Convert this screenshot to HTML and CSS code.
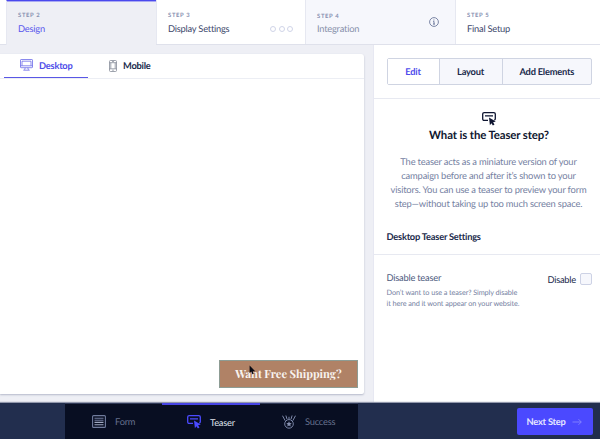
FILE: index.html
```html
<!DOCTYPE html>
<html lang="en">
<head>
<meta charset="utf-8">
<title>Campaign builder</title>
<link rel="stylesheet" href="styles.css">
</head>
<body>
<div class="app">
  <nav class="steps">
    <div class="step active"><small>STEP 2</small><span>Design</span></div>
    <div class="step display"><small>STEP 3</small><span>Display Settings</span>
      <div class="dots"><i></i><i></i><i></i></div></div>
    <div class="step muted"><small>STEP 4</small><span>Integration</span>
      <svg class="info" width="10" height="10" viewBox="0 0 10 10" fill="none" stroke="#6d799c"><circle cx="5" cy="5" r="4.4" stroke-width=".9"/><path d="M4.2 4.4H5V7M4 7.1h2M4.9 2.5v1"/></svg></div>
    <div class="step final"><small>STEP 5</small><span>Final Setup</span></div>
  </nav>
  <main class="main">
    <section class="canvas">
      <div class="card">
        <div class="tabs">
          <div class="tab on">
            <svg width="13" height="12" viewBox="0 0 13 12" fill="none" stroke="#6c6be8" stroke-width=".8"><rect x=".5" y=".5" width="12" height="8.2" rx=".6"/><path d="M.5 6.8h12M2 2.2h9v4.5M2 2.2v4.5M5.2 8.8l-.6 2M7.8 8.8l.6 2M3.3 11.2h6.4"/></svg>
            <span>Desktop</span></div>
          <div class="tab mobile">
            <svg width="8" height="12" viewBox="0 0 8 12" fill="none" stroke="#858b98" stroke-width=".8"><rect x=".5" y=".5" width="7" height="11" rx="1"/><path d="M.5 2.7h7M.5 8.8h7M3 1.6h2M3.2 10.2h1.6M1.8 2.7v6M6.2 2.7v6"/></svg>
            <span>Mobile</span></div>
        </div>
        <div class="stage">
          <div class="teaser"><span>Want Free Shipping?</span>
            <svg class="cursor" width="7" height="10" viewBox="0 0 7 10"><path d="M.6.5v7.6l1.7-1.5 1.1 2.7 1.4-.6-1.1-2.5h2.5z" fill="#090b14"/></svg></div>
        </div>
      </div>
    </section>
    <aside class="panel">
      <div class="modes">
        <div class="group"><b class="on">Edit</b><b>Layout</b><b>Add Elements</b></div>
      </div>
      <div class="about">
        <svg width="14" height="14" viewBox="0 0 14 14" fill="none" stroke="#0d1430" stroke-width="1.3"><path d="M6 8.3H2.2Q.7 8.3.7 6.8V2.1Q.7.7 2.2.7h9.6q1.5 0 1.5 1.4v4.7q0 1-1 1.4M3 3.9h8"/><path d="M7 5.6l6.8 3.8-2.7.9 1.4 2.1-1.6 1.1-1.5-2.3-1.5 2.1z" fill="#0d1430" stroke="none"/></svg>
        <h2>What is the Teaser step?</h2>
        <p>The teaser acts as a miniature version of your<br>campaign before and after it’s shown to your<br>visitors. You can use a teaser to preview your form<br>step—without taking up too much screen space.</p>
      </div>
      <h3>Desktop Teaser Settings</h3>
      <div class="setting">
        <div><h4>Disable teaser</h4>
          <p>Don’t want to use a teaser? Simply disable<br>it here and it wont appear on your website.</p></div>
        <label><span>Disable</span><i class="box"></i></label>
      </div>
    </aside>
  </main>
  <footer class="footer">
    <div class="views">
      <div class="view form">
        <svg width="14" height="13" viewBox="0 0 14 13" fill="none" stroke="#707b9c" stroke-width="1.1"><rect x=".6" y=".6" width="12.8" height="11.8" rx="1"/><path d="M2.5 3.2h9M2.5 5.2h9"/><path d="M2.5 7.4h9M2.5 9.8h9" stroke="#a0a9c1"/></svg>
        <span>Form</span></div>
      <div class="view current">
        <svg width="14" height="14" viewBox="0 0 14 14" fill="none" stroke="#4b4aff" stroke-width="1.3"><path d="M6 8.3H2.2Q.7 8.3.7 6.8V2.1Q.7.7 2.2.7h9.6q1.5 0 1.5 1.4v4.7q0 1-1 1.4M3 3.9h8"/><path d="M7 5.6l6.8 3.8-2.7.9 1.4 2.1-1.6 1.1-1.5-2.3-1.5 2.1z" fill="#4b4aff" stroke="none"/></svg>
        <span>Teaser</span></div>
      <div class="view success">
        <svg width="14" height="14" viewBox="0 0 14 14" fill="none" stroke="#7d88aa" stroke-width="1"><circle cx="7" cy="8.9" r="4.3"/><path d="M.5.7l2.7 5M13.5.7l-2.7 5M3.9.5L5 4.2M10.1.5L9 4.2M7 1.8v2.5"/><path d="M7 6.2l.8 1.8 1.9.2-1.4 1.3.4 1.9L7 10.4l-1.7 1 .4-1.9-1.4-1.3 1.9-.2z" fill="#8993b2" stroke="none"/></svg>
        <span>Success</span></div>
    </div>
    <div class="next"><span>Next Step</span>
      <svg width="10" height="8" viewBox="0 0 10 8" fill="none" stroke="#8b8bff" stroke-width=".8"><path d="M.5 4h8.7M6.5 1.2L9.3 4 6.5 6.8"/></svg></div>
  </footer>
</div>
</body>
</html>
```
FILE: styles.css
```css
* { box-sizing: border-box; margin: 0; }
body { font-family: Lato, "Open Sans", sans-serif; color: #202a4b; background: #fff; text-rendering: geometricPrecision; font-variant-ligatures: none; letter-spacing: -.22px; }
svg { display: block; flex: none; }
.app { width: 600px; height: 439px; display: flex; flex-direction: column; overflow: hidden; }

.steps { height: 45px; flex: none; display: grid; grid-template-columns: 150px 149px 150px 145px; padding-left: 6px; background: linear-gradient(#fff 44px, #dfe1eb 44px); }
.step { position: relative; padding: 12px 0 0 11px; height: 44px; border-left: 1px solid #e6e8f1; }
.step small { display: block; font-size: 5.9px; line-height: 7px; letter-spacing: .65px; font-weight: 700; color: #8791b1; }
.step span { display: block; font-size: 9.3px; line-height: 12px; margin-top: 4px; color: #3d486b; white-space: nowrap; }
.step.active { height: 45px; background: #eeeff5; border-top: 1px solid #4a49ed; box-shadow: inset 0 1px #a9a9f3; padding-top: 11px; }
.step.active span { color: #5856ed; }
.step.muted { background: #f6f7fc; padding-top: 13px; }
.step.muted span { color: #8790aa; margin-top: 3px; }
.dots { position: absolute; right: 12px; top: 26px; display: flex; gap: 2.4px; }
.dots i { width: 6px; height: 6px; border: 1px solid #d0d4e8; border-radius: 50%; }
.info { position: absolute; right: 16px; top: 17px; }

.main { flex: 1; display: flex; min-height: 0; }
.canvas { width: 373px; background: #eeeff5; padding: 8.5px 9px 9px 0; flex: none; }
.card { height: 340.5px; background: #fff; border-radius: 0 3px 2px 0; box-shadow: 0 1px 2px #b5b9ca; display: flex; flex-direction: column; }
.tabs { height: 25px; flex: none; display: flex; padding-left: 4px; border-bottom: 1px solid #eceef4; }
.tab { height: 24px; display: flex; align-items: center; font-size: 9.3px; font-weight: 700; }
.tab.on { width: 84px; padding-left: 16px; gap: 6px; color: #4e4de9; border-bottom: 1px solid #5957e5; }
.tab.mobile { padding-left: 21px; gap: 6px; }
.stage { flex: 1; display: flex; align-items: flex-end; justify-content: flex-end; padding: 0 6px 6px; }
.teaser { position: relative; width: 139px; height: 28px; background: #b08266; border: 1px solid #8d9c94; display: flex; align-items: center; justify-content: center; color: #f8f3ef; font: 700 11.2px "Playfair Display", "Liberation Serif", serif; letter-spacing: -.05px; white-space: nowrap; }
.teaser span { margin-top: -2px; }
.cursor { position: absolute; left: 29px; top: 4px; }

.panel { flex: 1; border-left: 1px solid #e7e8f2; padding-top: 13px; background: #fff; }
.modes { padding: 0 8px 0 12.5px; height: 41px; border-bottom: 1px solid #e7e9f1; }
.group { height: 27px; display: grid; grid-template-columns: 51px 63px 1fr; border: 1px solid #cfd4e2; border-radius: 2px; background: #f6f7fc; }
.group b { font-size: 9.3px; display: flex; align-items: center; justify-content: center; border-left: 1px solid #cfd4e2; }
.group b.on { border: 0; background: #fff; color: #4d4bec; }
.about { display: flex; flex-direction: column; align-items: center; text-align: center; padding: 13px 0 0 4px; }
.about h2 { font-size: 11.4px; line-height: 14px; letter-spacing: -.12px; margin-top: 3px; color: #10172f; white-space: nowrap; }
.about p { font-size: 9.35px; line-height: 14px; letter-spacing: -.18px; margin-top: 12px; padding-right: 1px; color: #7581a2; white-space: nowrap; }
.panel h3 { font-size: 9.3px; line-height: 12px; padding: 20px 0 11px 12.5px; border-bottom: 1px solid #e7e9f1; }
.setting { display: flex; justify-content: space-between; padding: 17px 8px 0 12.5px; white-space: nowrap; }
.setting h4 { font-size: 9.3px; line-height: 12px; font-weight: 400; color: #4e5b7e; }
.setting p { font-size: 7.3px; line-height: 10.5px; letter-spacing: -.09px; margin-top: 4px; color: #7581a2; }
.setting label { display: flex; height: 12px; margin-top: 1px; gap: 4px; align-items: center; font-size: 9.3px; }
.box { width: 12px; height: 12px; border: 1px solid #cdd2e5; border-radius: 2px; background: #f6f7fc; }

.footer { height: 36px; flex: none; display: flex; justify-content: space-between; background: #222e4e; box-shadow: 0 -1px 1px #9298ac; z-index: 1; padding-left: 65px; padding-right: 7.5px; }
.views { display: grid; grid-template-columns: 97px 98px 98px; background: #080e22; }
.view { display: flex; align-items: center; gap: 9px; font-size: 9.3px; color: #66708d; border-top: 1px solid #303957; }
.form { padding-left: 27px; }
.current { padding-left: 25px; color: #dfe1ea; border-top: 2px solid #4745e5; }
.success { padding-left: 22px; }
.next { width: 76px; height: 27px; margin-top: 5px; border-radius: 2px; background: #4b49ff; color: #e5e6ff; font-size: 9.3px; font-weight: 700; display: flex; align-items: center; justify-content: space-between; padding: 0 11px 0 10px; }
```
